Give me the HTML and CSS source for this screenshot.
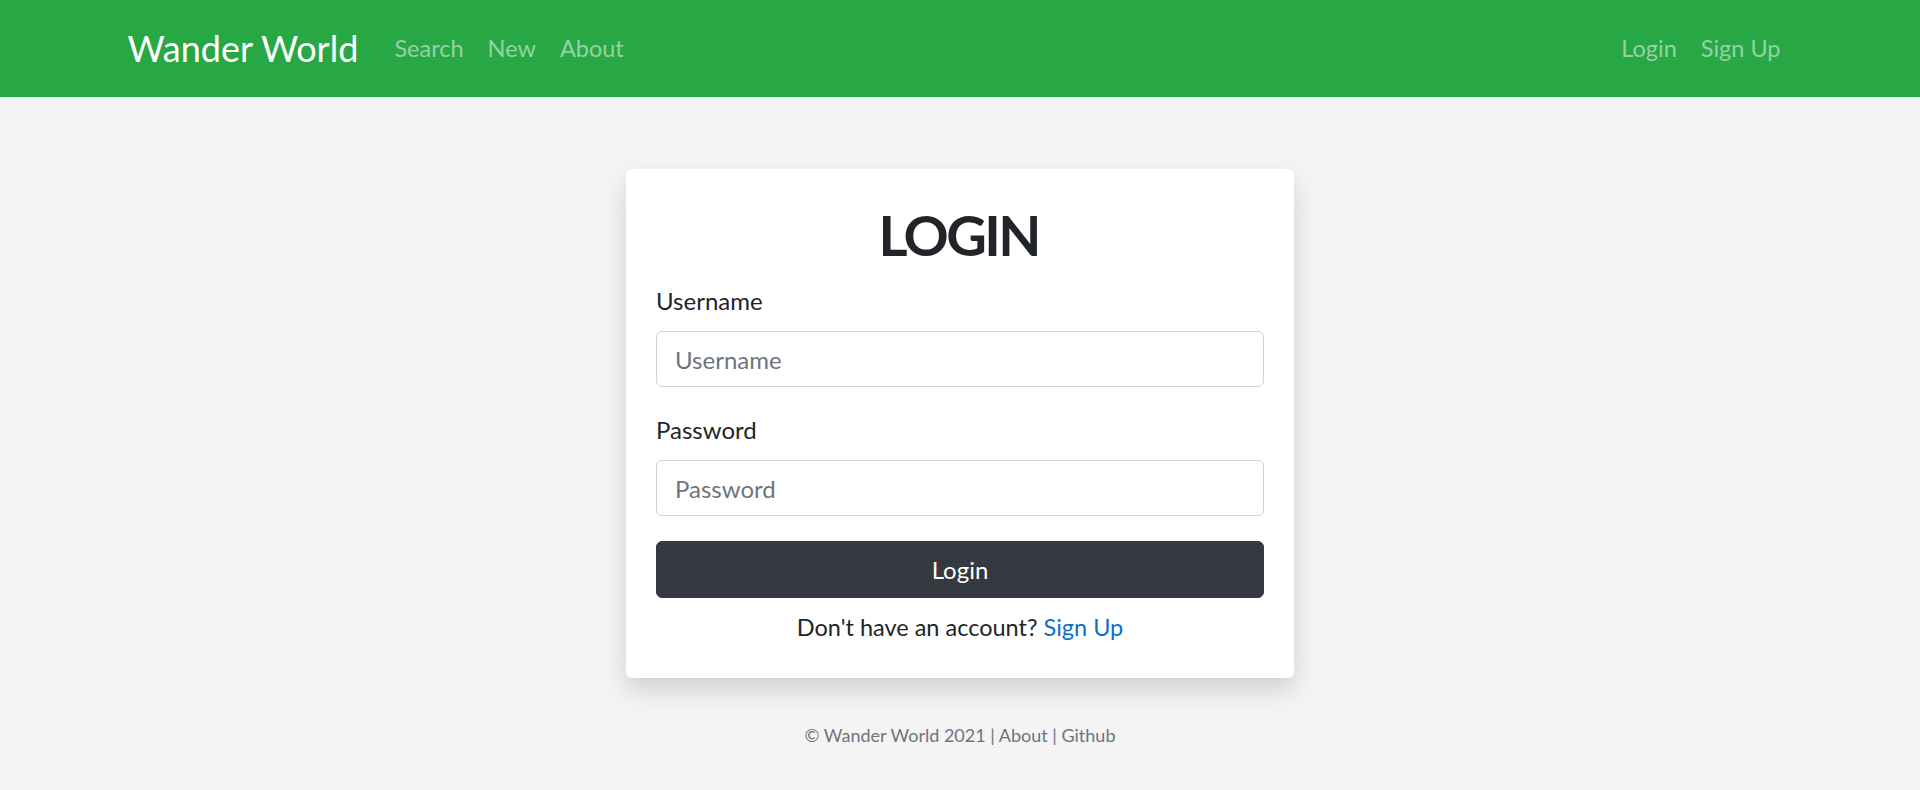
FILE: index.html
```html
<!DOCTYPE html>
<html lang="en">
<head>
<meta charset="utf-8">
<title>Wander World - Login</title>
<link rel="stylesheet" href="styles.css">
</head>
<body>
<nav class="navbar">
  <div class="container nav-inner">
    <a class="brand" href="#">Wander World</a>
    <ul class="nav-list">
      <li><a class="nav-link" href="#">Search</a></li>
      <li><a class="nav-link" href="#">New</a></li>
      <li><a class="nav-link" href="#">About</a></li>
    </ul>
    <ul class="nav-list nav-right">
      <li><a class="nav-link" href="#">Login</a></li>
      <li><a class="nav-link" href="#">Sign Up</a></li>
    </ul>
  </div>
</nav>

<main class="container main">
  <div class="card">
    <div class="card-body">
      <h1 class="title">LOGIN</h1>
      <form class="form">
        <div class="form-group">
          <label class="label" for="username">Username</label>
          <input class="input" id="username" type="text" placeholder="Username">
        </div>
        <div class="form-group">
          <label class="label" for="password">Password</label>
          <input class="input" id="password" type="password" placeholder="Password">
        </div>
        <button class="btn" type="button">Login</button>
      </form>
      <p class="signup">Don't have an account? <a class="link" href="#">Sign Up</a></p>
    </div>
  </div>
</main>

<footer class="footer">
  &copy; Wander World 2021 | <a class="footer-link" href="#">About</a> | <a class="footer-link" href="#">Github</a>
</footer>
</body>
</html>
```

FILE: styles.css
```css
* { box-sizing: border-box; }

html, body {
  margin: 0;
  padding: 0;
}

body {
  font-family: Lato, "Open Sans", sans-serif;
  font-size: 24px;
  line-height: 1.5;
  color: #212529;
  background: #f4f4f4;
}

.container {
  max-width: 1710px;
  margin: 0 auto;
  padding: 0 22.5px;
}

.navbar {
  background: #28a745;
  padding: 12px 0;
}

.nav-inner {
  display: flex;
  align-items: center;
}

.brand {
  font-size: 36px;
  line-height: 57px;
  padding: 8px 0;
  margin-right: 24px;
  color: #fff;
  text-decoration: none;
  white-space: nowrap;
}

.nav-list {
  list-style: none;
  margin: 0;
  padding: 0;
  display: flex;
}

.nav-right {
  margin-left: auto;
}

.nav-link {
  display: block;
  padding: 12px;
  font-size: 23.5px;
  color: rgba(255, 255, 255, 0.5);
  text-decoration: none;
}

.main {
  padding-top: 72px;
}

.card {
  width: 668px;
  margin: 0 auto;
  background: #fff;
  border-radius: 6px;
  box-shadow: 0 12px 24px rgba(0, 0, 0, 0.15);
}

.card-body {
  padding: 30px 30px 33px;
}

.title {
  margin: 0 0 12px;
  font-size: 56px;
  font-weight: 700;
  line-height: 72px;
  text-align: center;
  letter-spacing: -2.6px;
  text-indent: -2.6px;
}

.form-group {
  margin-bottom: 25px;
}

.label {
  display: block;
  margin-bottom: 12px;
}

.input {
  display: block;
  width: 100%;
  height: 56px;
  padding: 9px 18px;
  font-family: inherit;
  font-size: 24px;
  line-height: 1.5;
  color: #495057;
  background: #fff;
  border: 1px solid #ced4da;
  border-radius: 6px;
}

.input::placeholder {
  color: #6c757d;
}

.btn {
  display: block;
  width: 100%;
  height: 57px;
  margin-top: 1px;
  padding: 9px 18px;
  font-family: inherit;
  font-size: 24px;
  line-height: 1.5;
  color: #fff;
  background: #343a40;
  border: 1px solid #343a40;
  border-radius: 6px;
}

.signup {
  margin: 12px 0 0;
  text-align: center;
  font-size: 23.5px;
}

.link {
  color: #0e6ec8;
  text-decoration: none;
}

.footer {
  margin-top: 42px;
  text-align: center;
  font-size: 18px;
  line-height: 30px;
  color: #6c757d;
}

.footer-link {
  color: #6c757d;
  text-decoration: none;
}
```
